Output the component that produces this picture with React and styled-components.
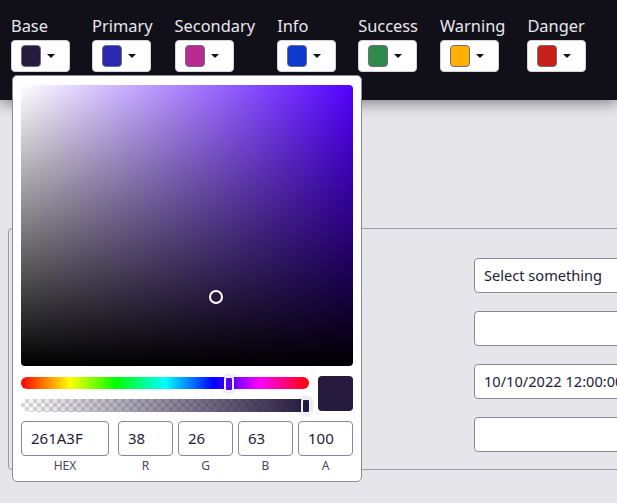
import React from "react";
import styled, { createGlobalStyle } from "styled-components";

const GlobalStyle = createGlobalStyle`
  html, body { margin: 0; padding: 0; }
  body {
    background: #e6e6ea;
    font-family: "Noto Sans", "Open Sans", sans-serif;
    color: #1e1d2e;
    overflow: hidden;
    width: 617px;
    height: 503px;
  }
`;

const Page = styled.div`
  position: relative;
  width: 617px;
  height: 503px;
  overflow: hidden;
`;

const Header = styled.header`
  position: relative;
  z-index: 1;
  height: 100px;
  box-sizing: border-box;
  background: #110f18;
  display: flex;
  align-items: flex-start;
  gap: 22px;
  padding: 14px 0 0 11px;
  box-shadow: 0 3px 14px rgba(0, 0, 0, 0.45);
`;

const Item = styled.div`
  display: flex;
  flex-direction: column;
  align-items: flex-start;
  gap: 3px;
`;

const Label = styled.span`
  color: #e8e7ee;
  font-size: 16.4px;
  line-height: 23px;
  white-space: nowrap;
`;

const SwatchButton = styled.button`
  display: flex;
  align-items: center;
  gap: 6px;
  box-sizing: border-box;
  width: 59px;
  height: 32px;
  padding: 0 14px 0 9px;
  margin: 0;
  background: #ffffff;
  border: 1px solid #d4d3dc;
  border-radius: 4px;
`;

const Swatch = styled.span`
  display: block;
  width: 22px;
  height: 22px;
  box-sizing: border-box;
  border-radius: 4px;
  border: 1px solid #6f6c80;
  background: ${(p) => p.$color};
`;

const Caret = styled.span`
  width: 0;
  height: 0;
  border-left: 4px solid transparent;
  border-right: 4px solid transparent;
  border-top: 4px solid #111;
`;

const Content = styled.main`
  padding: 128px 0 0 8px;
`;

const Card = styled.section`
  box-sizing: border-box;
  width: 720px;
  height: 242px;
  border: 1px solid #9c99ab;
  border-radius: 4px;
  padding: 29px 0 0 465px;
  display: flex;
  flex-direction: column;
  gap: 18px;
`;

const Field = styled.div`
  box-sizing: border-box;
  width: 220px;
  height: 35px;
  background: #fff;
  border: 1px solid #8a879c;
  border-radius: 4px;
  padding: 0 9px;
  font-size: 14.6px;
  line-height: 33px;
  color: #1d1c36;
  white-space: nowrap;
`;

const Popover = styled.div`
  position: absolute;
  z-index: 2;
  top: 75px;
  left: 12px;
  width: 350px;
  height: 407px;
  box-sizing: border-box;
  background: #fff;
  border: 1px solid #8c8a9c;
  border-radius: 5px;
  padding: 9px 8px 0 8px;
  display: flex;
  flex-direction: column;
  gap: 10px;
`;

const Saturation = styled.div`
  position: relative;
  width: 332px;
  height: 281px;
  border-radius: 4px;
  background:
    linear-gradient(to top, #000, rgba(0, 0, 0, 0)),
    linear-gradient(to right, #fff, rgba(255, 255, 255, 0)),
    ${(p) => p.$hue};
`;

const SatPointer = styled.span`
  position: absolute;
  width: 10px;
  height: 10px;
  margin: -7px 0 0 -7px;
  border: 2px solid #fff;
  border-radius: 50%;
  box-shadow: 0 0 1px rgba(0, 0, 0, 0.5);
`;

const SliderRow = styled.div`
  display: flex;
  gap: 9px;
`;

const Sliders = styled.div`
  display: flex;
  flex-direction: column;
  gap: 10px;
  width: 288px;
  padding-top: 1px;
`;

const Track = styled.div`
  position: relative;
  height: 12px;
  border-radius: 6px;
`;

const HueTrack = styled(Track)`
  background: linear-gradient(
    to right,
    #f00 0%,
    #ff0 17%,
    #0f0 33%,
    #0ff 50%,
    #00f 67%,
    #f0f 83%,
    #f00 100%
  );
`;

const AlphaTrack = styled(Track)`
  height: 13px;
  background:
    linear-gradient(to right, rgba(38, 26, 63, 0), rgba(38, 26, 63, 1)),
    repeating-conic-gradient(#d8d8d8 0% 25%, #ffffff 0% 50%) 0 0 / 8px 8px;
`;

const Thumb = styled.span`
  position: absolute;
  top: -1px;
  width: 6px;
  height: 12px;
  margin-left: -5px;
  border: 2px solid #f1f0f6;
  border-radius: 3px;
  background: ${(p) => p.$color};
  box-shadow: 0 0 4px rgba(0, 0, 0, 0.25);
`;

const Preview = styled.div`
  width: 35px;
  height: 35px;
  border-radius: 4px;
  background: ${(p) => p.$color};
`;

const InputsRow = styled.div`
  display: grid;
  grid-template-columns: 92px repeat(4, 55px);
  column-gap: 5px;
  margin-top: -1px;
`;

const InputCol = styled.div`
  display: flex;
  flex-direction: column;
  align-items: center;
  gap: 1px;
  width: ${(p) => (p.$wide ? "88px" : "55px")};
`;

const ValueBox = styled.div`
  box-sizing: border-box;
  width: 100%;
  height: 35px;
  border: 1px solid #8a879c;
  border-radius: 4px;
  padding: 0 9px;
  font-size: 15px;
  line-height: 33px;
  color: #1d1c36;
`;

const SmallLabel = styled.span`
  font-size: 12px;
  line-height: 18px;
  color: #4a4858;
`;

const colors = [
  { name: "Base", color: "#261a3f" },
  { name: "Primary", color: "#2a27b0" },
  { name: "Secondary", color: "#b82a94" },
  { name: "Info", color: "#0c3acc" },
  { name: "Success", color: "#2e8a48" },
  { name: "Warning", color: "#ffb000" },
  { name: "Danger", color: "#c81f18" },
];

const fields = [
  { label: "HEX", value: "261A3F", wide: true },
  { label: "R", value: "38" },
  { label: "G", value: "26" },
  { label: "B", value: "63" },
  { label: "A", value: "100" },
];

export default function App() {
  const hueDeg = 259.5;
  const s = 37 / 63;
  const v = 63 / 255;
  return (
    <Page>
      <GlobalStyle />
      <Header>
        {colors.map((c) => (
          <Item key={c.name}>
            <Label>{c.name}</Label>
            <SwatchButton>
              <Swatch $color={c.color} />
              <Caret />
            </SwatchButton>
          </Item>
        ))}
      </Header>
      <Content>
        <Card>
          <Field>Select something</Field>
          <Field />
          <Field>10/10/2022 12:00:00 AM</Field>
          <Field />
        </Card>
      </Content>
      <Popover>
        <Saturation $hue={`hsl(${hueDeg}, 100%, 50%)`}>
          <SatPointer style={{ left: `${s * 100}%`, top: `${(1 - v) * 100}%` }} />
        </Saturation>
        <SliderRow>
          <Sliders>
            <HueTrack>
              <Thumb
                $color={`hsl(${hueDeg}, 100%, 50%)`}
                style={{ left: `${(hueDeg / 360) * 100}%` }}
              />
            </HueTrack>
            <AlphaTrack>
              <Thumb $color="#261a3f" style={{ left: "99%" }} />
            </AlphaTrack>
          </Sliders>
          <Preview $color="#261a3f" />
        </SliderRow>
        <InputsRow>
          {fields.map((f) => (
            <InputCol key={f.label} $wide={f.wide}>
              <ValueBox>{f.value}</ValueBox>
              <SmallLabel>{f.label}</SmallLabel>
            </InputCol>
          ))}
        </InputsRow>
      </Popover>
    </Page>
  );
}
